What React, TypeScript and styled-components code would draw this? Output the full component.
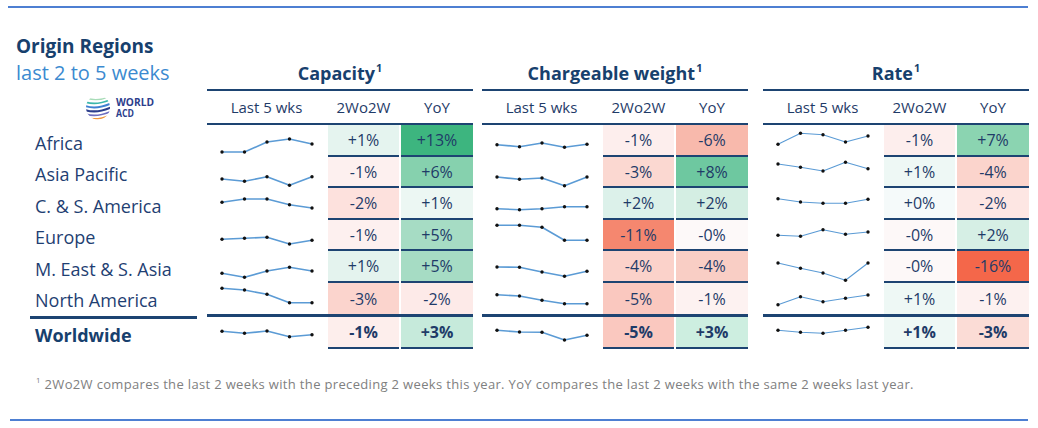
import React from 'react';
import styled, { createGlobalStyle } from 'styled-components';

const GlobalStyle = createGlobalStyle`
  html, body {
    margin: 0;
    padding: 0;
    background: #ffffff;
  }
  body {
    font-family: 'Open Sans', 'Lato', sans-serif;
    color: #1f3f6e;
  }
`;

const NAVY = '#1d4472';
const INK = '#1f3b68';

type Cell = { text: string; bg: string };
type Row = { spark: number[]; twoWeek: Cell; yoy: Cell };
type Block = { title: string; offset: number; thin?: boolean; rows: Row[] };

const regions = [
  'Africa',
  'Asia Pacific',
  'C. & S. America',
  'Europe',
  'M. East & S. Asia',
  'North America',
  'Worldwide',
];

const c = (text: string, bg: string): Cell => ({ text, bg });

const blocks: Block[] = [
  {
    title: 'Capacity',
    offset: 0,
    rows: [
      { spark: [27, 27, 17, 14, 19], twoWeek: c('+1%', '#e5f4ef'), yoy: c('+13%', '#3db57f') },
      { spark: [22, 24.3, 19.7, 28.3, 19.7], twoWeek: c('-1%', '#fdf0ef'), yoy: c('+6%', '#86d1ae') },
      { spark: [14.3, 11, 11, 16.7, 20], twoWeek: c('-2%', '#fde1dd'), yoy: c('+1%', '#ecf7f3') },
      { spark: [19.3, 18.3, 17.3, 24, 20.3], twoWeek: c('-1%', '#fdf0ef'), yoy: c('+5%', '#a6dcc4') },
      { spark: [22.3, 26.3, 20, 16.3, 20], twoWeek: c('+1%', '#e4f3ee'), yoy: c('+5%', '#a6dcc4') },
      { spark: [5.3, 7, 11.3, 19.7, 19.7], twoWeek: c('-3%', '#fbd4cd'), yoy: c('-2%', '#fdeae8') },
      { spark: [14.3, 16.3, 14, 19.7, 17.7], twoWeek: c('-1%', '#fdeeec'), yoy: c('+3%', '#c6eadb') },
    ],
  },
  {
    title: 'Chargeable weight',
    offset: 9,
    rows: [
      { spark: [19.7, 21.7, 18, 22.3, 19.3], twoWeek: c('-1%', '#fdeeed'), yoy: c('-6%', '#f8b9ac') },
      { spark: [20, 22.3, 21, 28.7, 20], twoWeek: c('-3%', '#fbd8d1'), yoy: c('+8%', '#6ec8a0') },
      { spark: [20.7, 21.7, 20.7, 18.7, 18.7], twoWeek: c('+2%', '#dcf1ea'), yoy: c('+2%', '#d4eee3') },
      { spark: [5.3, 5.3, 7.3, 20.3, 20.3], twoWeek: c('-11%', '#f5876f'), yoy: c('-0%', '#fdf9f9') },
      { spark: [16, 16.3, 21, 25.3, 20.3], twoWeek: c('-4%', '#fbd2ca'), yoy: c('-4%', '#f9cec5') },
      { spark: [11.7, 13, 17.3, 20.7, 20.7], twoWeek: c('-5%', '#fac8bf'), yoy: c('-1%', '#fdf2f1') },
      { spark: [13.3, 15, 15.3, 23, 18.3], twoWeek: c('-5%', '#fac8bf'), yoy: c('+3%', '#cdeee0') },
    ],
  },
  {
    title: 'Rate',
    offset: 15,
    thin: true,
    rows: [
      { spark: [19.3, 8.3, 9.7, 17, 11], twoWeek: c('-1%', '#fdeeed'), yoy: c('+7%', '#8bd4b1') },
      { spark: [7, 10.3, 14, 5.3, 11.7], twoWeek: c('+1%', '#eef8f5'), yoy: c('-4%', '#fbd4cc') },
      { spark: [10.7, 14, 15.3, 15.3, 11.3], twoWeek: c('+0%', '#f5fafa'), yoy: c('-2%', '#fde6e3') },
      { spark: [15.3, 16.3, 9.7, 14.3, 12], twoWeek: c('-0%', '#fdf8f8'), yoy: c('+2%', '#d6efe5') },
      { spark: [12, 17.3, 22, 29.3, 12], twoWeek: c('-0%', '#fdf8f8'), yoy: c('-16%', '#f4674a') },
      { spark: [21.7, 13.7, 18.7, 15.3, 12], twoWeek: c('+1%', '#eef8f5'), yoy: c('-1%', '#fdf1f0') },
      { spark: [13.3, 15.3, 16.3, 13.3, 10.3], twoWeek: c('+1%', '#eef8f5'), yoy: c('-3%', '#fbdcd6') },
    ],
  },
];

const Page = styled.div`
  width: 1038px;
  height: 428px;
  padding-top: 6px;
  box-sizing: border-box;
`;

const Rule = styled.div`
  height: 2px;
  background: #4d7fd2;
  margin: 0 10px 0 8px;
`;

const Board = styled.div`
  display: flex;
  align-items: flex-start;
`;

const Regions = styled.div`
  width: 207px;
  flex: none;
`;

const RegionsHead = styled.div`
  height: 119px;
  padding: 25px 0 0 16px;
  box-sizing: border-box;
`;

const Heading = styled.div`
  font-size: 19px;
  font-weight: 700;
  line-height: 26px;
  color: #17406d;
`;

const Subheading = styled.div`
  font-size: 20px;
  line-height: 28px;
  color: #3b8ad0;
`;

const LogoWrap = styled.div`
  margin: 8px 0 0 69px;
  height: 26px;
`;

const RegionLabel = styled.div<{ $total?: boolean; $divider?: boolean }>`
  height: 31.5px;
  margin-left: 30px;
  width: 162px;
  padding-left: 5px;
  box-sizing: content-box;
  display: flex;
  align-items: center;
  font-size: 18px;
  font-weight: ${p => (p.$total ? 700 : 400)};
  color: ${p => (p.$total ? '#17406d' : '#1f3f73')};
  border-bottom: ${p => (p.$divider ? `3px solid ${NAVY}` : 'none')};
`;

const Section = styled.div<{ $offset: number }>`
  width: 266px;
  flex: none;
  margin-left: ${p => p.$offset}px;
`;

const SectionTitle = styled.div`
  height: 83px;
  box-sizing: border-box;
  display: flex;
  align-items: flex-end;
  justify-content: center;
  padding-bottom: 4px;
  font-size: 18px;
  font-weight: 700;
  line-height: 24px;
  color: #17406d;
  border-bottom: 2px solid ${NAVY};
`;

const Sup = styled.sup`
  font-size: 0.6em;
  line-height: 0;
  vertical-align: 0.7em;
  margin-left: 1px;
`;

const Grid = styled.div`
  display: grid;
  grid-template-columns: 119px 71px 72px;
  column-gap: 2px;
`;

const ColumnHeads = styled(Grid)`
  height: 32px;
  border-bottom: 2px solid ${NAVY};
`;

const Head = styled.div`
  display: flex;
  align-items: center;
  justify-content: center;
  font-size: 15px;
  color: ${INK};
`;

const DataRow = styled(Grid)<{ $divider?: boolean }>`
  height: 31.5px;
  border-bottom: ${p => (p.$divider ? `3px solid ${NAVY}` : 'none')};
`;

const Value = styled.div<{ $bg: string; $bold?: boolean; $open?: boolean }>`
  display: flex;
  align-items: center;
  justify-content: center;
  box-sizing: border-box;
  background: ${p => p.$bg};
  border-bottom: ${p => (p.$open ? 'none' : `2px solid ${NAVY}`)};
  font-size: 16px;
  font-weight: ${p => (p.$bold ? 700 : 400)};
  color: ${INK};
  padding-top: 1px;
`;

const Footnote = styled.div`
  margin: 25px 0 0 35px;
  font-size: 13px;
  line-height: 16px;
  color: #808080;
  letter-spacing: 0.34px;
`;

const BottomRule = styled(Rule)`
  margin-top: 27px;
  margin-left: 10px;
`;

const Spark: React.FC<{ points: number[]; thin?: boolean }> = ({ points, thin }) => {
  const xs = [15, 37.5, 60, 82.5, 105];
  const path = points.map((y, i) => `${i ? 'L' : 'M'}${xs[i]} ${y}`).join(' ');
  return (
    <svg width="119" height="31.5" style={{ overflow: 'visible', display: 'block' }}>
      <path d={path} fill="none" stroke="#5b9bd5" strokeWidth={thin ? 1.1 : 1.6} strokeLinejoin="round" />
      {points.map((y, i) => (
        <circle key={i} cx={xs[i]} cy={y} r={1.7} fill="#111" />
      ))}
    </svg>
  );
};

// WORLD ACD mark: striped globe plus wordmark
const Logo: React.FC = () => (
  <svg width="72" height="26" viewBox="0 0 72 26">
    <defs>
      <clipPath id="globe">
        <circle cx="13" cy="12.5" r="12" />
      </clipPath>
    </defs>
    <g clipPath="url(#globe)" fill="none" strokeLinecap="round">
      <path d="M2 3 Q12 7 26 1" stroke="#a8dcb8" strokeWidth="1.4" />
      <path d="M0 7 Q12 11 27 4" stroke="#3cb7ac" strokeWidth="1.8" />
      <path d="M0 11 Q12 15 27 8" stroke="#3f80d2" strokeWidth="2" />
      <path d="M0 15 Q12 19 27 12" stroke="#2c3e8c" strokeWidth="2.2" />
      <path d="M0 19 Q12 23 27 16" stroke="#6f6fc0" strokeWidth="1.8" />
      <path d="M0 22.5 Q12 26.5 27 19.5" stroke="#f0953a" strokeWidth="1.8" />
      <path d="M0 26 Q12 30 27 23" stroke="#e54b3c" strokeWidth="1.8" />
    </g>
    <g fill="#2c3e8c" fontFamily="'Open Sans', sans-serif" fontWeight="700" fontSize="11">
      <text x="31" y="11" textLength="38" lengthAdjust="spacingAndGlyphs">WORLD</text>
      <text x="31" y="21.5" textLength="18" lengthAdjust="spacingAndGlyphs">ACD</text>
    </g>
  </svg>
);

const App: React.FC = () => {
  const last = regions.length - 1;
  return (
    <>
      <GlobalStyle />
      <Page>
        <Rule />
        <Board>
          <Regions>
            <RegionsHead>
              <Heading>Origin Regions</Heading>
              <Subheading>last 2 to 5 weeks</Subheading>
              <LogoWrap>
                <Logo />
              </LogoWrap>
            </RegionsHead>
            {regions.map((name, i) => (
              <RegionLabel key={name} $total={i === last} $divider={i === last - 1}>
                {name}
              </RegionLabel>
            ))}
          </Regions>
          {blocks.map(block => (
            <Section key={block.title} $offset={block.offset}>
              <SectionTitle>
                <span>
                  {block.title}
                  <Sup>1</Sup>
                </span>
              </SectionTitle>
              <ColumnHeads>
                <Head>Last 5 wks</Head>
                <Head>2Wo2W</Head>
                <Head>YoY</Head>
              </ColumnHeads>
              {block.rows.map((row, i) => (
                <DataRow key={i} $divider={i === last - 1}>
                  <Spark points={row.spark} thin={block.thin} />
                  <Value $bg={row.twoWeek.bg} $bold={i === last} $open={i === last - 1}>
                    {row.twoWeek.text}
                  </Value>
                  <Value $bg={row.yoy.bg} $bold={i === last} $open={i === last - 1}>
                    {row.yoy.text}
                  </Value>
                </DataRow>
              ))}
            </Section>
          ))}
        </Board>
        <Footnote>
          <Sup>1</Sup> 2Wo2W compares the last 2 weeks with the preceding 2 weeks this year. YoY compares the last 2
          weeks with the same 2 weeks last year.
        </Footnote>
        <BottomRule />
      </Page>
    </>
  );
};

export default App;
